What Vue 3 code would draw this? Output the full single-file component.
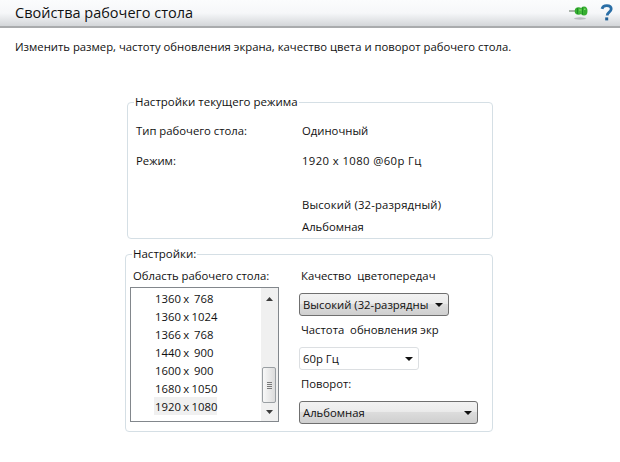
<template>
  <div class="page">
    <header class="head">
      <h1 class="title">Свойства рабочего стола</h1>
      <div class="tools">
        <svg class="pin" width="19" height="20" viewBox="0 0 19 20">
          <ellipse cx="11" cy="15.500" rx="6" ry="1.200" fill="#b9bcc0" />
          <path d="M0 8h7" stroke="#8f9c8f" stroke-width="1.500" />
          <ellipse cx="9.500" cy="8" rx="3.800" ry="3.800" fill="#35ad30" />
          <ellipse cx="15" cy="8" rx="3.500" ry="4.500" fill="#35ad30" />
          <rect x="9.500" y="5.500" width="5" height="5" fill="#44bc3a" />
          <path d="M8.500 5v6M13.500 4.500v7" stroke="#1e8f26" stroke-width="1" />
          <path d="M10 6.500h2.500v1h-2.500zM15 5.500h1.500v1.500H15z" fill="#7fdc6a" />
        </svg>
        <svg class="help" width="14" height="20" viewBox="0 0 14 20">
          <path d="M2 5.800C2.600 3.400 4.400 2.600 6.800 2.600c2.700 0 4.400 1.300 4.400 3.400 0 1.700-1 2.500-2.200 3.400-1.200.9-1.800 1.500-1.800 3.100" fill="none" stroke="#2a6ea6" stroke-width="2.800" />
          <rect x="5.200" y="14.400" width="3" height="3" fill="#1f5f96" />
        </svg>
      </div>
    </header>
    <p class="desc">Изменить размер, частоту обновления экрана, качество цвета и поворот рабочего стола.</p>

    <fieldset class="panel current">
      <legend>Настройки текущего режима</legend>
      <div class="info">
        <span class="row-a">Тип рабочего стола:</span><span class="row-a">Одиночный</span>
        <span class="row-b">Режим:</span><span class="row-b mode">1920 x 1080 @60р Гц</span>
        <span class="row-c"></span><span class="row-c depth">Высокий (32-разрядный)</span>
        <span class="row-d"></span><span class="row-d">Альбомная</span>
      </div>
    </fieldset>

    <fieldset class="panel settings">
      <legend>Настройки:</legend>
      <div class="cols">
        <div class="left">
          <div class="list-label">Область рабочего стола:</div>
          <div class="listbox">
            <ul class="items">
              <li v-for="m in modes" :key="m" :class="{ sel: m === selected }">{{ m }}</li>
            </ul>
            <div class="scroll">
              <svg width="7" height="4" viewBox="0 0 7 4"><path d="M3.500 0L7 4H0z" fill="#3c3c3c" /></svg>
              <div class="track">
                <div class="thumb"><i></i><i></i><i></i><i></i></div>
              </div>
              <svg width="7" height="4" viewBox="0 0 7 4"><path d="M0 0h7L3.500 4z" fill="#3c3c3c" /></svg>
            </div>
          </div>
        </div>
        <div class="right">
          <div class="lbl first">Качество&nbsp; цветопередач</div>
          <div class="combo raised w1"><span>Высокий (32-разрядны</span><b class="arrow"></b></div>
          <div class="lbl second">Частота&nbsp; обновления экр</div>
          <div class="combo flat w2"><span>60р Гц</span><b class="arrow"></b></div>
          <div class="lbl third">Поворот:</div>
          <div class="combo raised w3"><span>Альбомная</span><b class="arrow"></b></div>
        </div>
      </div>
    </fieldset>
  </div>
</template>

<script setup>
const modes = [
  '1360 x  768',
  '1360 x 1024',
  '1366 x  768',
  '1440 x  900',
  '1600 x  900',
  '1680 x 1050',
  '1920 x 1080'
]
const selected = '1920 x 1080'
</script>

<style scoped>
.page {
  width: 620px;
  height: 462px;
  overflow: hidden;
  background: #fff;
  color: #111;
  font-family: "Open Sans", "Noto Sans", sans-serif;
  font-size: 11.3px;
  line-height: 16px;
}
.head {
  height: 26px;
  border-bottom: 2px solid #a9abad;
  background: linear-gradient(#fbfcfd 0%, #f6f7f9 50%, #d3d6d9 100%);
  display: flex;
  align-items: center;
  justify-content: space-between;
  padding: 0 6px 0 15px;
}
.title {
  margin: 0;
  font-size: 14.500px;
  font-weight: 400;
  line-height: 26px;
  color: #111;
}
.tools {
  display: flex;
  align-items: center;
  gap: 12px;
}
.pin,
.help {
  display: block;
}
.desc {
  margin: 11px 0 0 15px;
  height: 16px;
  white-space: nowrap;
}
.panel {
  margin: 0;
  padding: 0;
  min-width: 0;
  box-sizing: border-box;
  border: 1px solid #d5dfe5;
  border-radius: 4px;
}
.panel legend {
  padding: 0 1px;
  margin-left: 6px;
  line-height: 16px;
  white-space: nowrap;
  font-size: 11.500px;
}
.current {
  width: 366px;
  height: 145px;
  margin: 39px 0 0 127px;
}
.info {
  display: grid;
  grid-template-columns: 166px 1fr;
  padding: 13px 0 0 8px;
  white-space: nowrap;
}
.info span {
  display: block;
  height: 16px;
}
.row-b {
  margin-top: 14px;
}
.row-c {
  margin-top: 28px;
}
.row-d {
  margin-top: 6px;
}
.mode {
  letter-spacing: 0.4px;
}
.depth {
  letter-spacing: 0.15px;
}
.settings {
  width: 368px;
  height: 186px;
  margin: 7px 0 0 125px;
}
.cols {
  display: flex;
  padding: 6px 0 0 4px;
}
.left {
  width: 169px;
  flex: none;
}
.list-label {
  margin-left: 3px;
  height: 16px;
  white-space: nowrap;
}
.listbox {
  margin-top: 3px;
  width: 149px;
  height: 135px;
  box-sizing: border-box;
  border: 1px solid #82878c;
  display: flex;
  background: #fff;
}
.items {
  list-style: none;
  margin: 0;
  padding: 1px 0 0 24px;
  flex: 1;
  word-spacing: -0.5px;
}
.items li {
  height: 18px;
  line-height: 20px;
  white-space: pre;
  width: 62px;
  padding-left: 1px;
  margin-left: -1px;
}
.items li.sel {
  background: #f0f0f0;
}
.scroll {
  width: 17px;
  margin-right: 0;
  background: #f0f0f0;
  display: flex;
  flex-direction: column;
  align-items: center;
  justify-content: space-between;
  padding: 9px 0 7px;
  box-sizing: border-box;
}
.track {
  flex: 1;
  width: 100%;
  position: relative;
}
.thumb {
  position: absolute;
  left: 1px;
  bottom: 7px;
  width: 14px;
  height: 36px;
  box-sizing: border-box;
  border: 1px solid #9a9fa3;
  border-radius: 2px;
  background: linear-gradient(90deg, #f8f8f8, #dcdcdc);
  display: flex;
  flex-direction: column;
  justify-content: center;
  align-items: center;
  gap: 1px;
}
.thumb i {
  width: 5px;
  height: 1px;
  background: #7a7a7a;
}
.right {
  display: flex;
  flex-direction: column;
  align-items: flex-start;
}
.lbl {
  height: 16px;
  margin-left: 2px;
  white-space: nowrap;
}
.combo {
  box-sizing: border-box;
  height: 23px;
  border-radius: 3px;
  display: flex;
  align-items: center;
  justify-content: space-between;
  padding: 0 4px 0 3px;
  white-space: nowrap;
}
.raised {
  border: 1px solid #6f6f6f;
  background: linear-gradient(#f2f2f2 0%, #ebebeb 45%, #dcdcdc 50%, #cfcfcf 100%);
}
.flat {
  border: 1px solid #dcdfe2;
  background: #fff;
}
.w1 {
  width: 150px;
  margin-top: 9px;
}
.w2 {
  width: 120px;
  margin-top: 9px;
}
.w3 {
  width: 179px;
  margin-top: 9px;
}
.second {
  margin-top: 6px;
}
.third {
  margin-top: 6px;
}
.arrow {
  width: 0;
  height: 0;
  flex: none;
  border-left: 4px solid transparent;
  border-right: 4px solid transparent;
  border-top: 4px solid #111;
  margin-right: 1px;
}
</style>
